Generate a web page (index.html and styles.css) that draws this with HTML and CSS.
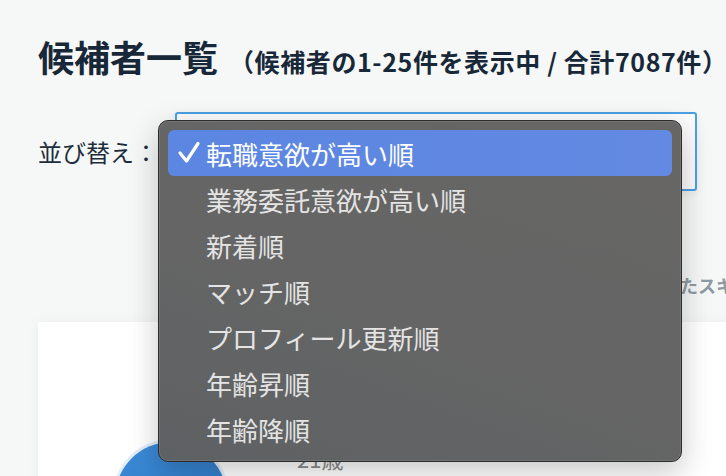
FILE: index.html
```html
<!DOCTYPE html>
<html lang="ja">
<head>
<meta charset="utf-8">
<title>候補者一覧</title>
<link rel="stylesheet" href="styles.css">
</head>
<body>
<main class="page">
  <h1 class="title">候補者一覧<span class="count">（候補者の1-25件を表示中 / 合計7087件）</span></h1>
  <div class="sort-row">
    <span class="sort-label">並び替え：</span>
    <div class="select-box"></div>
  </div>
  <div class="skill-row"><span class="skill-text">保存したスキル</span></div>
  <section class="card">
    <div class="avatar"></div>
    <div class="age">21歳</div>
  </section>
</main>
<div class="menu">
  <div class="menu-item selected">
    <svg class="check" width="24" height="24" viewBox="0 0 24 24"><polyline points="3,12 9.5,20 21,2.5" fill="none" stroke="#ffffff" stroke-width="3.2" stroke-linecap="round" stroke-linejoin="round"/></svg>
    <span>転職意欲が高い順</span>
  </div>
  <div class="menu-item"><span>業務委託意欲が高い順</span></div>
  <div class="menu-item"><span>新着順</span></div>
  <div class="menu-item"><span>マッチ順</span></div>
  <div class="menu-item"><span>プロフィール更新順</span></div>
  <div class="menu-item"><span>年齢昇順</span></div>
  <div class="menu-item"><span>年齢降順</span></div>
</div>
</body>
</html>
```
FILE: styles.css
```css
html, body {
  margin: 0;
  padding: 0;
}
body {
  background: #f6f8f8;
  font-family: "Noto Sans CJK JP", "Noto Sans", sans-serif;
  color: #1b2a38;
  width: 726px;
  height: 476px;
  overflow: hidden;
  position: relative;
}
.page {
  padding: 34px 0 0 38px;
}
.title {
  margin: 0;
  font-size: 36px;
  line-height: 44px;
  height: 44px;
  font-weight: 700;
  white-space: nowrap;
  color: #182838;
}
.count {
  font-size: 25px;
  line-height: 1;
  letter-spacing: 0.6px;
  margin-left: 11px;
  font-weight: 700;
}
.sort-row {
  margin-top: 34px;
  display: flex;
  align-items: center;
}
.sort-label {
  font-size: 24px;
  line-height: 30px;
  width: 137px;
  color: #1e2d3b;
  white-space: nowrap;
}
.select-box {
  width: 518px;
  height: 75px;
  border: 2px solid #4a9fe3;
  border-radius: 3px;
  background: #fbfbfb;
  box-shadow: 0 3px 10px rgba(0, 0, 0, 0.06);
}
.skill-row {
  margin-top: 82px;
  height: 24px;
  line-height: 24px;
  white-space: nowrap;
  padding-left: 588px;
}
.skill-text {
  font-size: 18px;
  font-weight: 700;
  color: #8e9aa2;
}
.card {
  margin-top: 25px;
  background: #ffffff;
  width: 760px;
  height: 300px;
  box-shadow: 0 0 14px rgba(0, 0, 0, 0.04);
  display: flex;
  align-items: flex-start;
  padding: 120px 0 0 77px;
  box-sizing: border-box;
}
.avatar {
  width: 112px;
  height: 112px;
  border-radius: 50%;
  background: linear-gradient(160deg, #3c8cd8, #2b74c2);
  box-shadow: 0 0 0 3px #e3eef8;
  flex: none;
}
.age {
  margin-left: 70px;
  margin-top: 4px;
  font-size: 22px;
  line-height: 24px;
  color: #8a8a8a;
}
.menu {
  position: absolute;
  left: 158px;
  top: 120px;
  width: 524px;
  height: 342px;
  box-sizing: border-box;
  padding: 9px 9px;
  border: 1px solid #2c2c2c;
  border-radius: 10px;
  background: linear-gradient(20deg, #5e6163 0%, #656565 45%, #676665 100%);
  box-shadow: inset 0 0 0 1px rgba(255, 255, 255, 0.1), 0 10px 30px rgba(0, 0, 0, 0.22);
}
.menu-item {
  height: 46px;
  display: flex;
  align-items: center;
  padding-left: 38px;
  position: relative;
  font-size: 26px;
  color: #e4e4e4;
  white-space: nowrap;
  border-radius: 6px;
}
.menu-item.selected {
  background: linear-gradient(90deg, #5b86e1, #6389e2);
  color: #ffffff;
}
.check {
  position: absolute;
  left: 9px;
  top: 11px;
}
```
